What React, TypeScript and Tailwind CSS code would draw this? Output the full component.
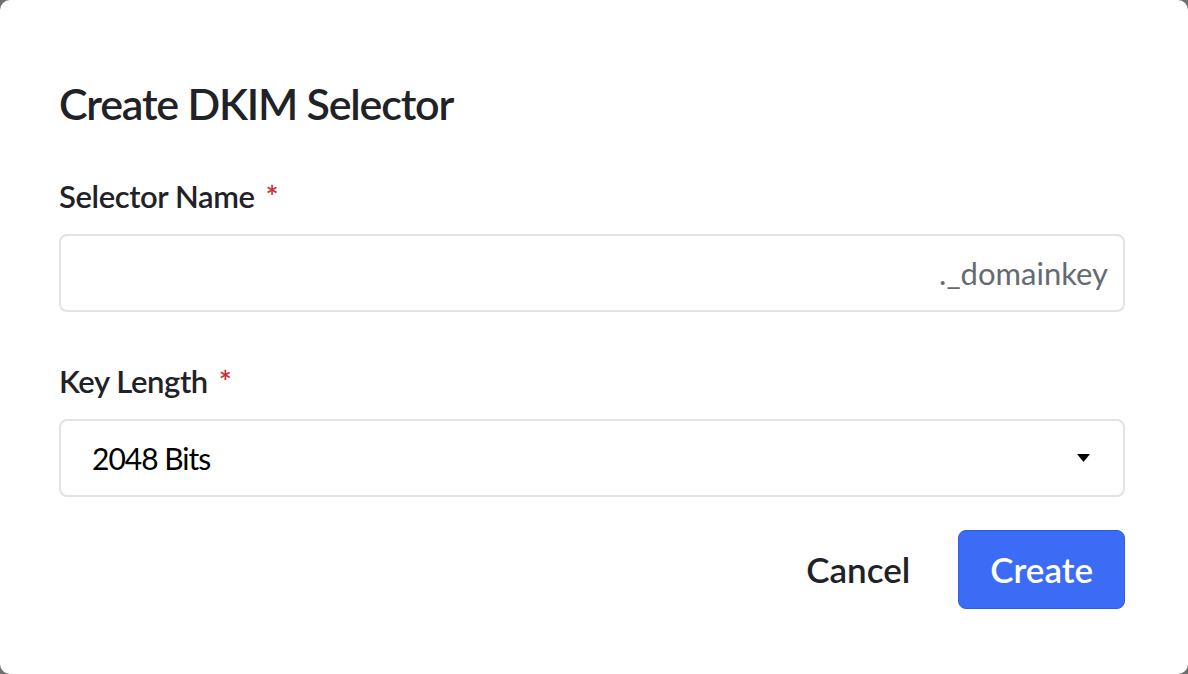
export default function App() {
  return (
    <div className="h-screen w-screen bg-[#6f6f6f]" style={{ fontFamily: "Lato, 'Noto Sans', sans-serif" }}>
      <div className="flex h-full flex-col rounded-[10px] bg-white pl-[59px] pr-[63px] pt-[82px]">
        <h2 className="text-[43px] leading-[44px] font-semibold tracking-[-1.2px] text-[#1f2328]">Create DKIM Selector</h2>

        <label className="mt-[55px] flex text-[31px] leading-[31px] font-semibold tracking-[-0.4px] text-[#1f2328]">
          Selector Name
          <span className="ml-[11px] text-[#c8323c]">*</span>
        </label>
        <div className="mt-[22px] flex h-[78px] items-center justify-end rounded-lg border-2 border-[#e1e3e6] pr-[15px]">
          <span className="text-[31px] text-[#646a70]">._domainkey</span>
        </div>

        <label className="mt-[54px] flex text-[31px] leading-[31px] font-semibold tracking-[-0.4px] text-[#1f2328]">
          Key Length
          <span className="ml-[11px] text-[#c8323c]">*</span>
        </label>
        <div className="mt-[22px] flex h-[78px] items-center justify-between rounded-lg border-2 border-[#e1e3e6] pl-[31px] pr-[33px]">
          <span className="text-[30px] tracking-[-1px] text-black">2048 Bits</span>
          <svg width="13" height="8" viewBox="0 0 13 8">
            <path d="M0 0h13L6.5 8z" fill="#000" />
          </svg>
        </div>

        <div className="mt-[33px] flex items-center justify-end gap-[13px]">
          <button className="h-[79px] px-[35px] text-[35px] font-semibold text-[#1f2328]">Cancel</button>
          <button className="h-[79px] rounded-lg border border-[#2f5de0] bg-[#3c6cf6] px-[31px] text-[35px] font-semibold text-white">
            Create
          </button>
        </div>
      </div>
    </div>
  );
}
